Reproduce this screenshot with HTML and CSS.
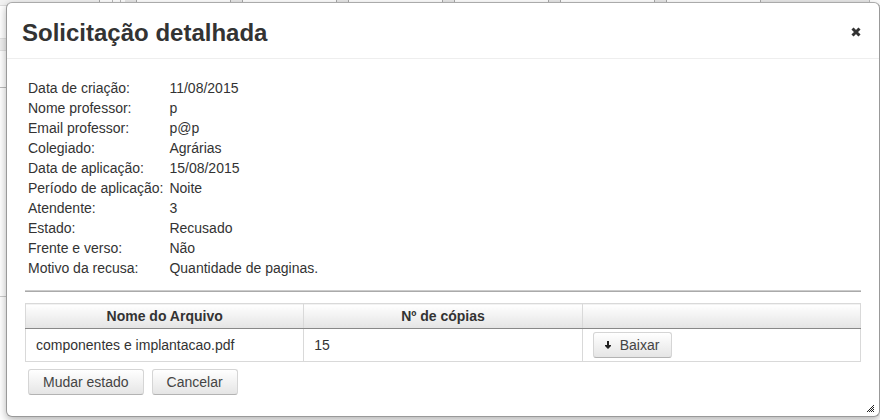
FILE: index.html
```
<!DOCTYPE html>
<html lang="pt-BR">
<head>
<meta charset="utf-8">
<title>Solicitação detalhada</title>
<link rel="stylesheet" href="styles.css">
</head>
<body>
<div class="backdrop" aria-hidden="true">
  <div class="backdrop-filters">
    <span class="filter-lead"></span>
    <span class="filter-edge"></span>
    <div class="filter-fields">
      <span class="field"></span>
      <span class="field"></span>
      <span class="field"></span>
      <span class="field"></span>
      <span class="field"></span>
      <span class="field"></span>
      <span class="field-rest"></span>
    </div>
  </div>
  <div class="backdrop-blank"></div>
  <div class="backdrop-bar"></div>
  <div class="backdrop-row"></div>
  <div class="backdrop-panel"></div>
</div>
<section class="dialog" role="dialog" aria-labelledby="dialog-title">
  <header class="titlebar">
    <h1 id="dialog-title">Solicitação detalhada</h1>
    <button class="close" type="button" aria-label="Fechar">
      <svg width="10" height="10" viewBox="0 0 10 10"><path d="M1.5 1.5l7 7M8.500 1.500l-7 7" fill="none" stroke="#333" stroke-width="3"/></svg>
    </button>
  </header>
  <div class="content">
    <dl class="details">
      <dt>Data de criação:</dt><dd>11/08/2015</dd>
      <dt>Nome professor:</dt><dd>p</dd>
      <dt>Email professor:</dt><dd>p@p</dd>
      <dt>Colegiado:</dt><dd>Agrárias</dd>
      <dt>Data de aplicação:</dt><dd>15/08/2015</dd>
      <dt>Período de aplicação:</dt><dd>Noite</dd>
      <dt>Atendente:</dt><dd>3</dd>
      <dt>Estado:</dt><dd>Recusado</dd>
      <dt>Frente e verso:</dt><dd>Não</dd>
      <dt>Motivo da recusa:</dt><dd>Quantidade de paginas.</dd>
    </dl>
    <hr class="separator">
    <table class="files">
      <thead>
        <tr><th scope="col">Nome do Arquivo</th><th scope="col">Nº de cópias</th><th></th></tr>
      </thead>
      <tbody>
        <tr>
          <td>componentes e implantacao.pdf</td>
          <td>15</td>
          <td>
            <button class="button download" type="button">
              <svg width="8" height="10" viewBox="0 0 8 10"><path d="M3 1h2v4h2v1L4 9 1 6V5h2z" fill="#222"/></svg>
              Baixar
            </button>
          </td>
        </tr>
      </tbody>
    </table>
    <div class="actions">
      <button class="button" type="button">Mudar estado</button>
      <button class="button" type="button">Cancelar</button>
    </div>
  </div>
  <svg class="grip" width="8" height="8" viewBox="0 0 8 8" shape-rendering="crispEdges"><path d="M0 7h1v1H0zM1 6h1v1H1zM2 5h1v1H2zM3 4h1v1H3zM4 3h1v1H4zM5 2h1v1H5zM6 1h1v1H6zM2 7h1v1H2zM3 6h1v1H3zM4 5h1v1H4zM5 4h1v1H5zM6 3h1v1H6zM4 7h1v1H4zM5 6h1v1H5zM6 5h1v1H6zM6 7h1v1H6z" fill="#222"/></svg>
</section>
</body>
</html>
```
FILE: styles.css
```
* {
  box-sizing: border-box;
}

body {
  margin: 0;
  padding: 2px 0 3px 6px;
  background: #fff;
  color: #333;
  font: 14px/20px "Liberation Sans", Arial, sans-serif;
  overflow: hidden;
}

.backdrop {
  position: absolute;
  inset: 0;
  z-index: -1;
  display: flex;
  flex-direction: column;
}

.backdrop-filters {
  display: flex;
  height: 6px;
  border-bottom: 1px solid #ddd;
}

.filter-lead {
  width: 100px;
  background: #f2f2f2;
  border-right: 1px solid #aaa;
}

.filter-edge {
  width: 21px;
  margin-right: 4px;
  border-right: 1px solid #bbb;
  box-shadow: inset -7px 0 #fff, inset -8px 0 #bbb;
}

.filter-fields {
  display: flex;
  flex: 1;
  gap: 11px;
  margin-right: 10px;
  padding-left: 11px;
  background: #e8e8e8;
  border-right: 1px solid #bbb;
}

.field {
  width: 95px;
  background: #fff;
  border: solid #aaa;
  border-width: 0 1px;
}

.field-rest {
  flex: 1;
}

.backdrop-blank {
  height: 32px;
}

.backdrop-bar {
  height: 13px;
  background: #f0f0f0;
  border: solid #e2e2e2;
  border-width: 1px 0;
}

.backdrop-row {
  height: 37px;
  border-bottom: 1px solid #bbb;
}

.backdrop-panel {
  height: 209px;
  border-bottom: 1px solid #ccc;
}

.dialog {
  position: relative;
  border: 1px solid #999;
  border-top-color: #aaa;
  border-radius: 6px;
  background: #fff;
  box-shadow: 0 3px 8px rgba(0, 0, 0, .3);
}

.titlebar {
  display: flex;
  align-items: center;
  justify-content: space-between;
  height: 56px;
  padding: 4px 18px 0 15px;
  border-bottom: 1px solid #eee;
}

h1 {
  margin: 0;
  font-size: 24px;
  line-height: 28px;
}

.close {
  display: flex;
  padding: 0 0 2px;
  border: 0;
  background: none;
}

.content {
  padding: 19px 18px 21px;
}

.details {
  display: grid;
  grid-template-columns: max-content 1fr;
  column-gap: 6px;
  margin: 0 3px;
}

.details dd {
  margin: 0;
}

.separator {
  height: 2px;
  margin: 12px 0 11px;
  border: solid #ccc;
  border-width: 1px 0;
  border-bottom-color: #aaa;
}

.files {
  width: 100%;
  border-collapse: collapse;
  table-layout: fixed;
}

.files th {
  height: 25px;
  padding: 2px 10px;
  border: 1px solid #d9d9d9;
  border-bottom-color: #888;
  background: linear-gradient(#fff, #e4e4e4);
}

.files th + th {
  border-left-color: #bbb;
}

.files td {
  height: 33px;
  padding: 3px 10px;
  border: 1px solid #d9d9d9;
  border-top: 0;
}

.button {
  height: 26px;
  padding: 0 14px;
  border: 1px solid #d5d5d5;
  border-bottom-color: #b3b3b3;
  border-radius: 3px;
  background: linear-gradient(#fff, #e5e5e5);
  color: #444;
  font: inherit;
}

.download {
  display: flex;
  align-items: center;
  gap: 8px;
  padding: 0 12px 0 10px;
}

.actions {
  display: flex;
  gap: 8px;
  margin: 7px 3px 0;
}

.grip {
  position: absolute;
  right: 4px;
  bottom: 4px;
}
```
